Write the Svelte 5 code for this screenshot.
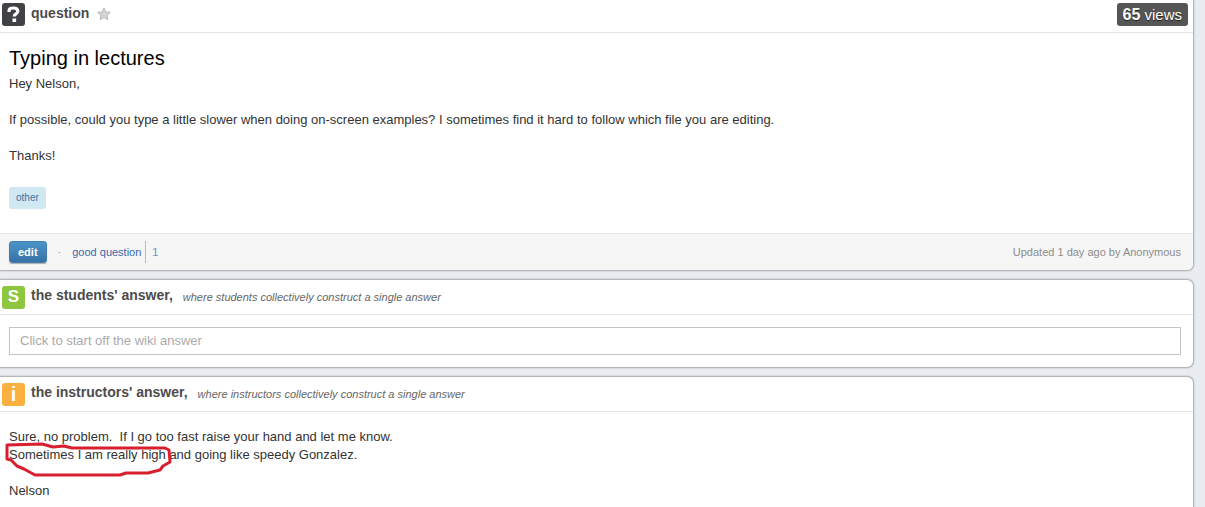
<script>
  let wiki = $state('');
</script>

<main>
  <article class="card first">
    <header class="bar">
      <span class="badge dark" aria-hidden="true">
        <svg width="23" height="23" viewBox="0 0 23 23">
          <path d="M7 9V7.800C7 5.800 8.800 5 11.400 5c2.800 0 4.400.9 4.400 3.200 0 2.800-3.600 2.600-3.600 5.200" fill="none" stroke="#fff" stroke-width="3.200" />
          <rect x="10.500" y="15.500" width="3.600" height="3.500" fill="#fff" />
        </svg>
      </span>
      <h2>question</h2>
      <button class="star" aria-label="favorite">
        <svg width="14" height="14" viewBox="0 0 14 14">
          <path d="M7 .8l1.800 4 4.500.5-3.300 3 .9 4.500L7 10.600l-3.900 2.200.9-4.500-3.300-3 4.500-.5z" fill="#d4d4d4" stroke="#bcbcbc" />
        </svg>
      </button>
      <span class="views"><b>65</b> views</span>
    </header>
    <section class="content">
      <h1>Typing in lectures</h1>
      <p>Hey Nelson,</p>
      <p>If possible, could you type a little slower when doing on-screen examples? I sometimes find it hard to follow which file you are editing.</p>
      <p>Thanks!</p>
      <a class="tag" href="#other">other</a>
    </section>
    <footer>
      <button class="edit">edit</button>
      <span class="dot">·</span>
      <button class="good">good question</button>
      <span class="count">1</span>
      <span class="updated">Updated 1 day ago by Anonymous</span>
    </footer>
  </article>

  <article class="card">
    <header class="bar">
      <span class="badge green" aria-hidden="true">S</span>
      <h2>the students' answer,</h2>
      <em>where students collectively construct a single answer</em>
    </header>
    <div class="wiki">
      <input type="text" aria-label="students' answer" placeholder="Click to start off the wiki answer" bind:value={wiki} />
    </div>
  </article>

  <article class="card last">
    <header class="bar">
      <span class="badge orange" aria-hidden="true">i</span>
      <h2>the instructors' answer,</h2>
      <em>where instructors collectively construct a single answer</em>
    </header>
    <section class="content reply">
      <p>Sure, no problem.&nbsp; If I go too fast raise your hand and let me know.<br /><span class="marked">Sometimes I am really high<svg class="ring" width="170" height="36" viewBox="0 0 170 36" aria-hidden="true">
            <path d="M3 3L38 2L49 5L60 4L68 6L161 6L165 8L166 20L159 24L156 28L144 31L122 31L116 33L31 33L20 27L13 24L7 18L3 17Z" fill="none" stroke="#d81f2f" stroke-width="3" stroke-linejoin="round" />
          </svg></span> and going like speedy Gonzalez.</p>
      <p>Nelson</p>
    </section>
  </article>
</main>

<style>
  :global(body) {
    background: #e9edf2;
    overflow: hidden;
  }
  main {
    display: flex;
    flex-direction: column;
    gap: 8px;
    margin-right: 11px;
    font: 13px/18px "Liberation Sans", Arial, sans-serif;
    color: #333;
  }
  h1, h2, p { margin: 0; }
  button { font: inherit; border: 0; padding: 0; background: none; cursor: pointer; }
  .card {
    background: #fff;
    border: 1px solid #b3b7ba;
    border-left: 0;
    border-radius: 0 7px 7px 0;
    box-shadow: 0 0 2px #a9adb0;
    overflow: hidden;
  }
  .first { border-top: 0; border-top-right-radius: 0; }
  .last { border-bottom: 0; border-bottom-right-radius: 0; }
  .bar {
    display: flex;
    align-items: center;
    height: 34px;
    padding: 0 5px 0 2px;
    border-bottom: 1px solid #e4e4e4;
  }
  .first .bar { height: 32px; }
  .badge {
    display: flex;
    align-items: center;
    justify-content: center;
    width: 23px;
    height: 23px;
    border-radius: 3px;
    color: #fff;
    font-size: 20px;
    font-weight: bold;
  }
  .first .badge { margin-bottom: 4px; }
  .dark { background: #414246; }
  .green { background: #8dc63f; font-size: 17px; }
  .orange { background: #fbb040; }
  h2 {
    margin: 0 10px 0 6px;
    padding-bottom: 4px;
    font-size: 14px;
    line-height: 18px;
    color: #4c4c4c;
  }
  .first h2 { margin-right: 8px; padding-bottom: 6px; }
  .star { display: flex; margin-bottom: 5px; }
  em { font-size: 11px; color: #666; }
  .views {
    margin: 0 0 4px auto;
    padding: 0 6px;
    border-radius: 3px;
    background: #555;
    color: #fff;
    font-size: 15px;
    line-height: 23px;
    text-shadow: 0 1px 1px #222;
  }
  .views b { font-size: 16px; }
  .content { padding: 13px 9px 24px; }
  h1 {
    margin-bottom: 4px;
    font-size: 20px;
    font-weight: normal;
    line-height: 25px;
    color: #000;
  }
  p + p { margin-top: 18px; }
  .tag {
    display: block;
    width: fit-content;
    margin-top: 22px;
    padding: 0 7px;
    border-radius: 3px;
    background: #d0e8f1;
    color: #3f74a3;
    font-size: 10px;
    line-height: 22px;
    text-decoration: none;
  }
  footer {
    display: flex;
    align-items: center;
    height: 36px;
    padding: 0 12px 0 9px;
    border-top: 1px solid #e2e2e2;
    background: #f6f6f6;
    font-size: 11px;
  }
  .edit {
    padding: 0 8px;
    border: 1px solid #4380b0;
    border-radius: 3px;
    background: linear-gradient(#4b93c9, #3672a6);
    color: #fff;
    font-weight: bold;
    line-height: 20px;
    box-shadow: 0 1px 1px #aaa;
  }
  .dot { margin: 0 11px; color: #999; }
  .good { color: #3c66ad; }
  .count {
    margin-left: 4px;
    padding-left: 6px;
    border-left: 1px solid #b4bdc9;
    line-height: 22px;
    color: #6b8fc4;
  }
  .updated { margin-left: auto; color: #8c8c8c; }
  .wiki { display: flex; padding: 12px; padding-left: 9px; }
  input {
    flex: 1;
    min-width: 0;
    height: 28px;
    box-sizing: border-box;
    padding: 0 10px 2px;
    border: 1px solid #c4c4c4;
    font: inherit;
    color: #333;
  }
  input::placeholder { color: #aaa; opacity: 1; }
  .reply { padding-top: 16px; }
  .marked { position: relative; }
  .ring { position: absolute; left: -5px; top: -5px; }
</style>
